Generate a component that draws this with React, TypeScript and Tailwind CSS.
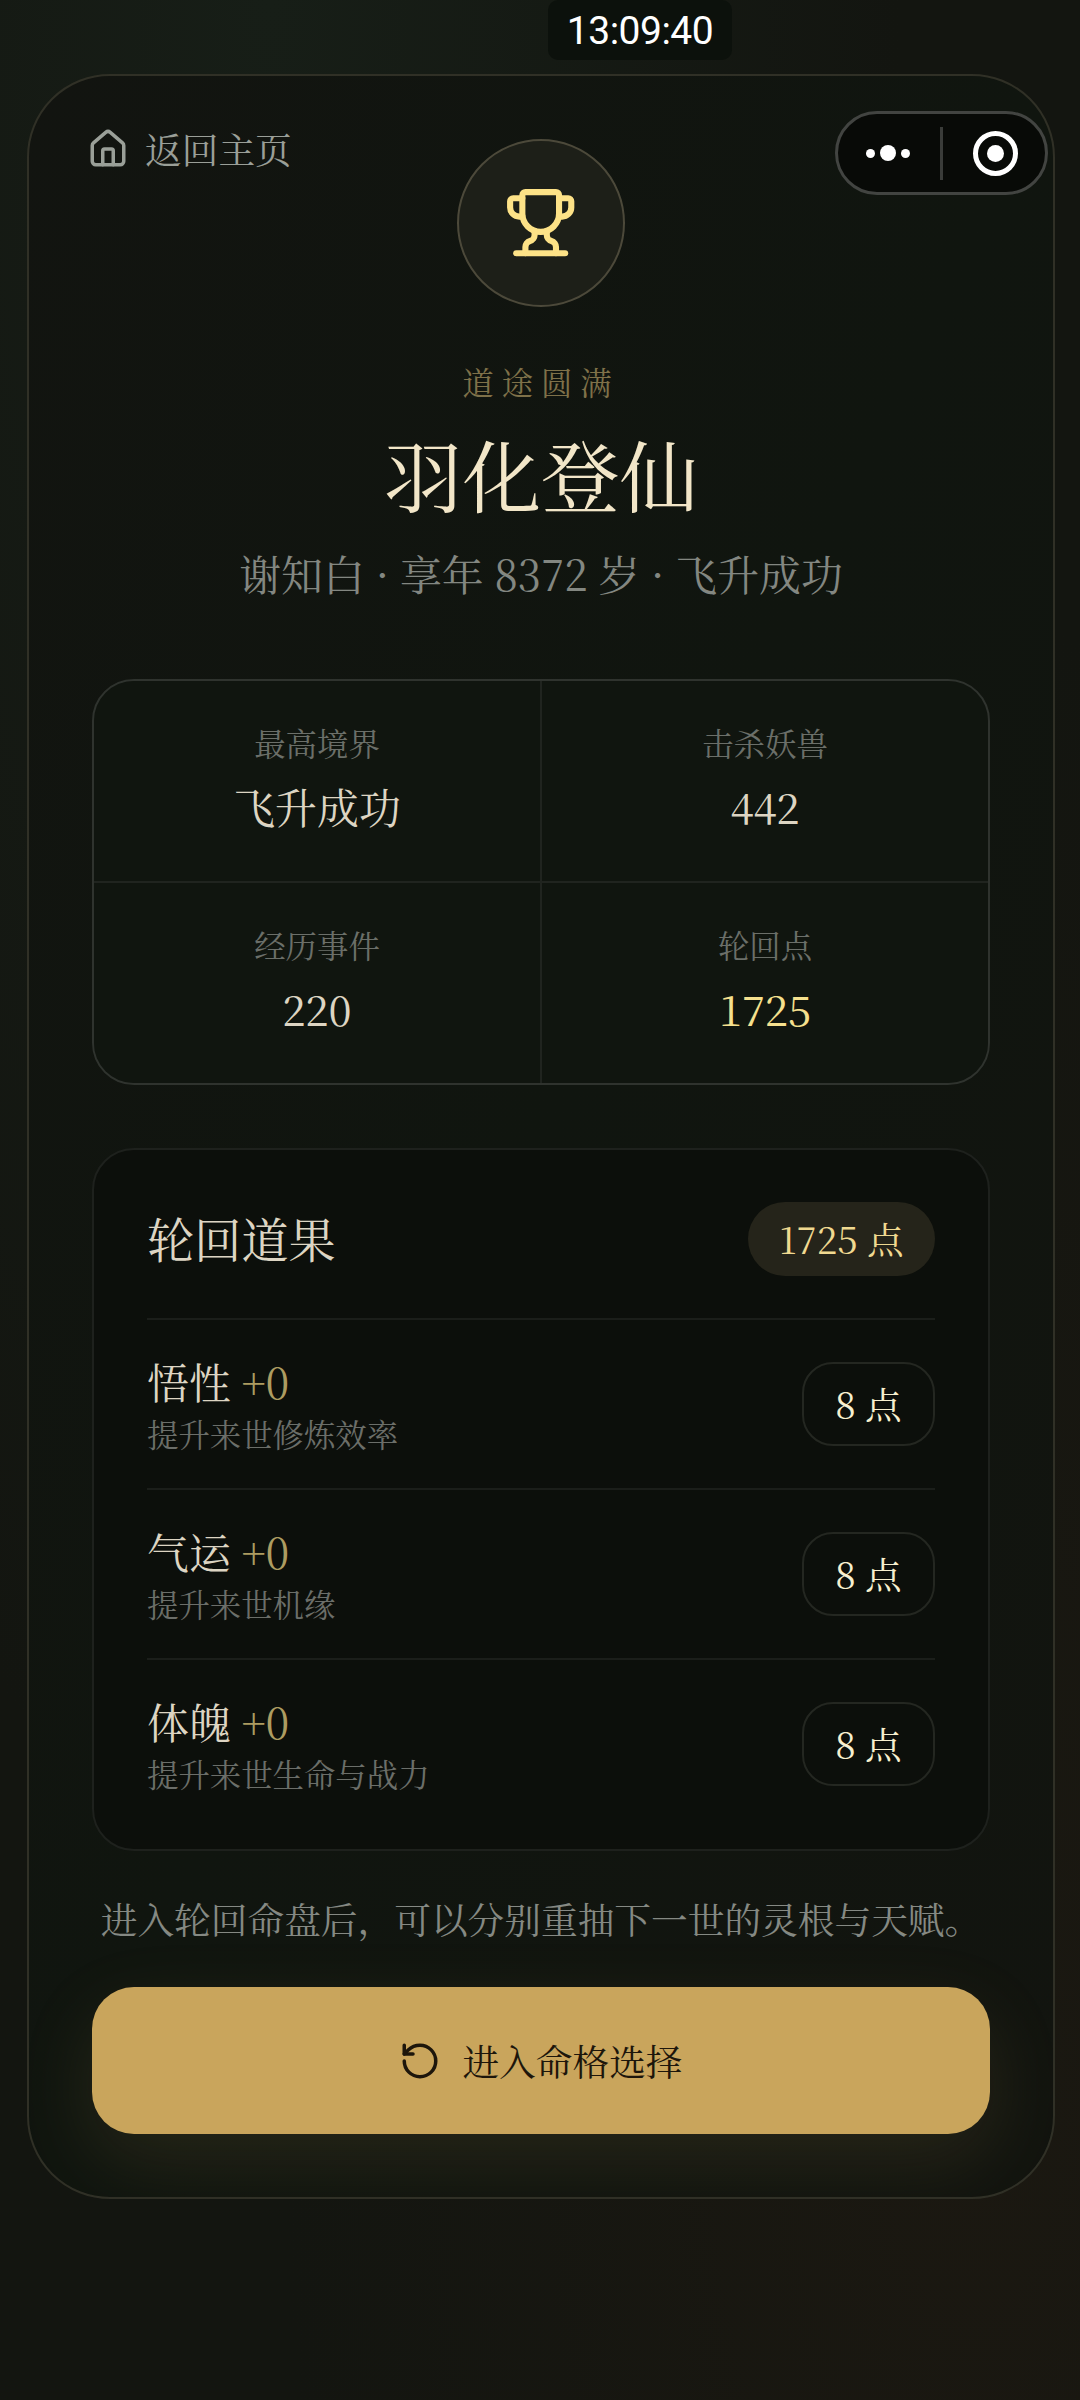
// App.tsx

import { House, RotateCcw } from 'lucide-react';

interface Stat {
  label: string;
  value: string;
  highlight?: boolean;
}

interface Upgrade {
  name: string;
  level: number;
  description: string;
  cost: number;
}

const stats: Stat[] = [
  { label: '最高境界', value: '飞升成功' },
  { label: '击杀妖兽', value: '442' },
  { label: '经历事件', value: '220' },
  { label: '轮回点', value: '1725', highlight: true },
];

const upgrades: Upgrade[] = [
  { name: '悟性', level: 0, description: '提升来世修炼效率', cost: 8 },
  { name: '气运', level: 0, description: '提升来世机缘', cost: 8 },
  { name: '体魄', level: 0, description: '提升来世生命与战力', cost: 8 },
];

function TrophyIcon() {
  return (
    <svg
      viewBox="0 0 24 24"
      className="size-[73.4px] text-[#fde287]"
      fill="none"
      stroke="currentColor"
      strokeWidth="2"
      strokeLinecap="round"
      strokeLinejoin="round"
    >
      <path d="M7 2h10a1 1 0 0 1 1 1v6a6 6 0 0 1-12 0V3a1 1 0 0 1 1-1Z" />
      <path d="M6 4H3a1 1 0 0 0-1 1v2a3 3 0 0 0 3 3h1" />
      <path d="M18 4h3a1 1 0 0 1 1 1v2a3 3 0 0 1-3 3h-1" />
      <path d="M10 14.7V16a2 2 0 0 1-1.5 2A2 2 0 0 0 7 20v2" />
      <path d="M14 14.7V16a2 2 0 0 0 1.5 2A2 2 0 0 1 17 20v2" />
      <path d="M4 22h16" />
    </svg>
  );
}

function Clock() {
  return (
    <div className="absolute left-[548px] top-0 flex h-[60px] w-[184px] items-center justify-center rounded-[10px] bg-[#0c110c] pt-[2px] font-[Roboto,sans-serif] text-[39px] tracking-[-0.5px] text-white">
      13:09:40
    </div>
  );
}

// Mini program menu that floats over the page
function Capsule() {
  return (
    <div className="absolute left-[835px] top-[111px] flex h-[84px] w-[213px] items-center rounded-full border-[3px] border-[#424441] bg-[#080a07]">
      <div className="flex w-[102px] items-center justify-center gap-[5px] pr-[3px]">
        <span className="size-[9px] rounded-full bg-white" />
        <span className="size-4 rounded-full bg-white" />
        <span className="size-[9px] rounded-full bg-white" />
      </div>
      <span className="h-[53px] w-[3px] bg-[#3a3c39]" />
      <div className="flex flex-1 items-center justify-center pl-[3px]">
        <span className="flex size-[45px] items-center justify-center rounded-full border-[5px] border-white">
          <span className="size-[17px] rounded-full bg-white" />
        </span>
      </div>
    </div>
  );
}

function StatGrid() {
  return (
    <div className="mt-[74px] grid h-[406px] grid-cols-2 gap-[2px] overflow-hidden rounded-[42px] border-2 border-[#2f332e] bg-[#20241f]">
      {stats.map((stat) => (
        <div key={stat.label} className="flex flex-col items-center bg-[#10150f] pt-[37px]">
          <span className="text-[31.4px] leading-[50px] text-[#6b6f69]">{stat.label}</span>
          <span
            className={`mt-[8px] text-[41.9px] leading-[60px] ${
              stat.highlight ? 'text-[#f5e08e]' : 'text-[#ddd5c3]'
            }`}
          >
            {stat.value}
          </span>
        </div>
      ))}
    </div>
  );
}

function UpgradeCard() {
  return (
    <div className="mt-[63px] h-[703px] rounded-[42px] border-2 border-[#1e211d] bg-[#0c0f0b] px-[53px] pt-[52px]">
      <div className="flex h-[74px] items-center justify-between">
        <h2 className="pb-[2px] text-[47.2px] leading-[72px] text-[#ddd5c3]">轮回道果</h2>
        <span className="flex h-[74px] w-[187px] items-center justify-center rounded-full bg-[#25241a] pb-px text-[36.7px] text-[#f0d990]">
          1725 点
        </span>
      </div>
      <div className="mt-[42px]">
        {upgrades.map((item) => (
          <div
            key={item.name}
            className="flex h-[170px] items-center justify-between border-t-2 border-[#1b1e1a]"
          >
            <div>
              <p className="text-[41.9px] leading-[60px] text-[#ddd5c3]">
                {item.name} <span className="text-[#ad9c61]">+{item.level}</span>
              </p>
              <p className="text-[31.4px] leading-[46px] text-[#6b6e69]">{item.description}</p>
            </div>
            <button className="h-[84px] w-[133px] rounded-[31px] border-2 border-[#242721] text-[36.7px] text-[#f7f0cf]">
              {item.cost} 点
            </button>
          </div>
        ))}
      </div>
    </div>
  );
}

export default function App() {
  return (
    <div className="relative h-[2400px] w-[1080px] overflow-hidden bg-[#131510] bg-[radial-gradient(ellipse_at_25%_0%,#171e17_0%,transparent_55%),radial-gradient(ellipse_at_90%_88%,#1b1811_0%,transparent_50%)] pl-[27px] pt-[74px] font-['Noto_Serif_CJK_SC','Noto_Serif_SC','Liberation_Serif','Noto_Sans_CJK_SC',serif] font-normal">
      <main className="relative h-[2125px] w-[1028px] overflow-hidden rounded-[83px] border-2 border-[#303026] bg-linear-to-br from-[#121410] via-[#10150f] to-[#12140f] px-[63px]">
        <button className="absolute left-[58px] top-[46px] flex items-center gap-4 text-[36.7px] leading-[52px] text-[#9a9f98]">
          <House size={42} className="relative top-px" />
          返回主页
        </button>

        <header className="flex flex-col items-center pt-[63px]">
          <div className="flex size-[168px] items-center justify-center rounded-full border-2 border-[#4c493a] bg-[#1d1f18]">
            <TrophyIcon />
          </div>
          <p className="mt-[52px] text-[31.4px] leading-[46px] tracking-[7.8px] text-[#7f7149]">
            道途圆满
          </p>
          <h1 className="mt-[18px] text-[78.6px] leading-[100px] text-[#f2e6c8]">羽化登仙</h1>
          <p className="mt-[18px] text-[41.9px] leading-[64px] text-[#838781]">
            谢知白 · 享年 8372 岁 · 飞升成功
          </p>
        </header>

        <StatGrid />
        <UpgradeCard />

        <p className="-mx-4 mt-[41px] text-center text-[36.7px] leading-[52px] whitespace-nowrap text-[#858983]">
          进入轮回命盘后，可以分别重抽下一世的灵根与天赋。
        </p>
        <button className="mt-[43px] flex h-[147px] w-full items-center justify-center gap-[21px] rounded-[42px] bg-[#c9a55c] text-[36.7px] text-[#1d160b] shadow-[0_26px_78px_rgba(201,165,92,0.12)]">
          <RotateCcw size={42} />
          进入命格选择
        </button>
      </main>

      <Clock />
      <Capsule />
    </div>
  );
}
